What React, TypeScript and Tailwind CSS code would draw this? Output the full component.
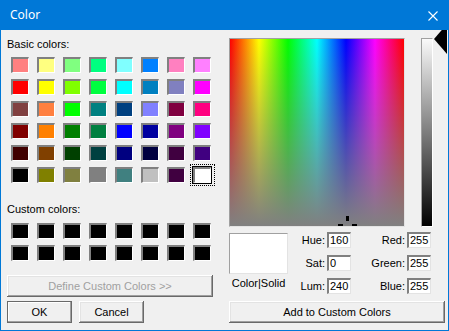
import React from 'react';

const BASIC: string[][] = [
  ['#ff8080', '#ffff80', '#80ff80', '#00ff80', '#80ffff', '#0080ff', '#ff80c0', '#ff80ff'],
  ['#ff0000', '#ffff00', '#80ff00', '#00ff40', '#00ffff', '#0080c0', '#8080c0', '#ff00ff'],
  ['#804040', '#ff8040', '#00ff00', '#008080', '#004080', '#8080ff', '#800040', '#ff0080'],
  ['#800000', '#ff8000', '#008000', '#008040', '#0000ff', '#0000a0', '#800080', '#8000ff'],
  ['#400000', '#804000', '#004000', '#004040', '#000080', '#000040', '#400040', '#400080'],
  ['#000000', '#808000', '#808040', '#808080', '#408080', '#c0c0c0', '#400040', '#ffffff'],
];

const CUSTOM = Array.from({ length: 16 }, () => '#000000');

const Swatch = ({ color, selected }: { color: string; selected?: boolean }) => (
  <div className="relative w-[18px] h-[16px]">
    <div
      className={`w-full h-full border-t-2 border-l-2 border-b border-r border-t-[#808080] border-l-[#808080] border-b-white border-r-white ${
        selected ? 'outline outline-1 outline-black' : ''
      }`}
      style={{ backgroundColor: color }}
    />
    {selected && <div className="absolute -top-[3px] -left-[3px] -right-[4px] -bottom-[3px] border border-dotted border-black" />}
  </div>
);

const Field = ({ value }: { value: string }) => (
  <div className="h-4 bg-white border-t-2 border-l-2 border-b border-r border-t-[#808080] border-l-[#808080] border-b-[#e3e3e3] border-r-[#e3e3e3] pl-[1px] text-[11px] leading-[13px] text-black">
    {value}
  </div>
);

const raised =
  'shadow-[inset_-1px_-1px_#696969,inset_1px_1px_#ffffff,inset_-2px_-2px_#a0a0a0,inset_2px_2px_#e3e3e3]';

export default function App() {
  return (
    <div
      className="w-[449px] h-[331px] flex flex-col bg-[#0078d7] px-px pb-px"
      style={{ fontFamily: '"Liberation Sans", Arial, sans-serif' }}
    >
      {/* Title bar */}
      <div className="relative z-10 h-[30px] flex items-center justify-between pl-[9px] pr-[10px] bg-[#0078d7]">
        <span className="text-white text-[12px] leading-none" style={{ fontFamily: '"Segoe UI", "Noto Sans", sans-serif' }}>
          Color
        </span>
        <svg width="10" height="10" viewBox="0 0 10 10" className="mt-px">
          <path d="M0.5 0.5 L9.5 9.5 M9.5 0.5 L0.5 9.5" stroke="#fff" strokeWidth="1.1" />
        </svg>
      </div>

      {/* Body */}
      <div className="flex-1 flex bg-[#f0f0f0] overflow-hidden text-[11px] leading-[13px] text-black">
        {/* Left column */}
        <div className="w-[206px] ml-[6px] flex flex-col">
          <div className="mt-[8px] h-[13px]">Basic colors:</div>
          <div className="mt-[6px] ml-[4px] grid grid-cols-[repeat(8,18px)] gap-x-[8px] gap-y-[6px]">
            {BASIC.flat().map((c, i) => (
              <Swatch key={i} color={c} selected={i === 47} />
            ))}
          </div>
          <div className="mt-[20px] h-[13px]">Custom colors:</div>
          <div className="mt-[7px] ml-[4px] grid grid-cols-[repeat(8,18px)] gap-x-[8px] gap-y-[6px]">
            {CUSTOM.map((c, i) => (
              <Swatch key={i} color={c} />
            ))}
          </div>
          <div className={`mt-[14px] h-[22px] flex items-center justify-center text-[#a0a0a0] ${raised}`}>
            Define Custom Colors &gt;&gt;
          </div>
          <div className="mt-[4px] flex gap-[7px]">
            <div className="w-[65px] h-[22px] flex items-center justify-center border border-[#696969] shadow-[inset_-1px_-1px_#a0a0a0,inset_1px_1px_#ffffff]">
              OK
            </div>
            <div className={`w-[65px] h-[22px] flex items-center justify-center ${raised}`}>Cancel</div>
          </div>
        </div>

        {/* Right column */}
        <div className="ml-[16px] flex flex-col">
          <div className="mt-[8px] flex items-start">
            <div className="relative w-[176px] h-[189px] border border-t-[#a0a0a0] border-l-[#a0a0a0] border-b-[#e3e3e3] border-r-[#e3e3e3] bg-[linear-gradient(to_bottom,rgba(128,128,128,0),#808080),linear-gradient(to_right,#ff0000,#ffff00,#00ff00,#00ffff,#0000ff,#ff00ff,#ff0000)] overflow-hidden">
              {/* crosshair */}
              <div className="absolute left-[116px] top-[177px] w-[3px] h-[5px] bg-black" />
              <div className="absolute left-[108px] top-[185px] w-[5px] h-[3px] bg-black" />
              <div className="absolute left-[122px] top-[185px] w-[5px] h-[3px] bg-black" />
            </div>
            <div className="relative ml-[16px] w-[12px] h-[189px] border border-t-[#a0a0a0] border-l-[#a0a0a0] border-b-white border-r-white bg-[linear-gradient(to_bottom,#fafafa,#000000)]">
              <svg width="13" height="30" viewBox="0 0 13 30" className="absolute left-[12px] -top-[15px]">
                <polygon points="0,15 13,0 13,30" fill="#000" />
              </svg>
            </div>
          </div>

          <div className="mt-[5px] flex items-start">
            <div className="w-[59px] flex flex-col items-center">
              <div className="mt-px w-[59px] h-[41px] bg-white border border-t-[#a0a0a0] border-l-[#a0a0a0] border-b-[#e3e3e3] border-r-[#e3e3e3]" />
              <div className="mt-[3px] h-[13px]">Color|Solid</div>
            </div>
            <div className="grid grid-cols-[37px_24px] gap-x-[2px] gap-y-[7px] items-center">
              <span className="text-right">Hue:</span>
              <Field value="160" />
              <span className="text-right">Sat:</span>
              <Field value="0" />
              <span className="text-right">Lum:</span>
              <Field value="240" />
            </div>
            <div className="grid grid-cols-[54px_24px] gap-x-[2px] gap-y-[7px] items-center">
              <span className="text-right">Red:</span>
              <Field value="255" />
              <span className="text-right">Green:</span>
              <Field value="255" />
              <span className="text-right">Blue:</span>
              <Field value="255" />
            </div>
          </div>

          <div className={`mt-[7px] w-[216px] h-[22px] flex items-center justify-center ${raised}`}>
            Add to Custom Colors
          </div>
        </div>
      </div>
    </div>
  );
}
